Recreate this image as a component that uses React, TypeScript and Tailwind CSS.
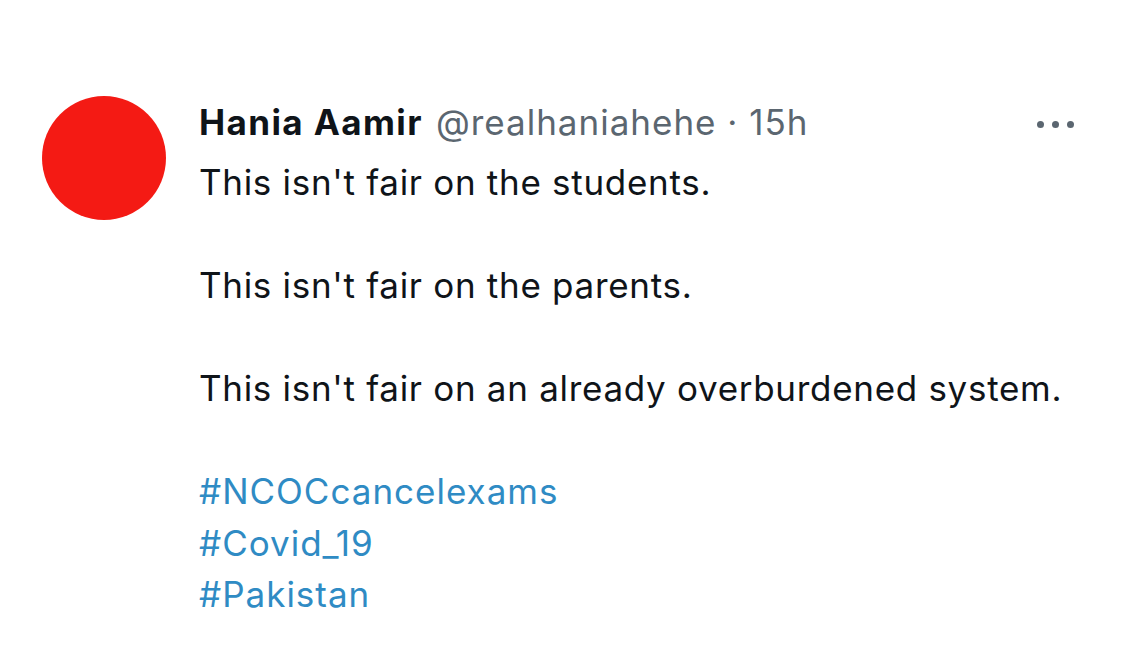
import React from "react";

export default function App() {
  return (
    <div className="w-[1124px] h-[645px] bg-white overflow-hidden" style={{ fontFamily: 'Inter, "Liberation Sans", Arial, sans-serif' }}>
      <div className="flex pl-[42px] pt-[96px] pr-[48px]">
        <div className="w-[124px] h-[124px] rounded-full bg-[#f41a14] shrink-0" />
        <div className="ml-[33px] flex-1">
          <div className="flex items-center h-[52px] leading-[52px]">
            <span className="text-[35px] font-bold text-[#0f1419] tracking-[1.4px]">Hania Aamir</span>
            <span className="text-[35px] text-[#5b6670] ml-[13px] tracking-[1px]">@realhaniahehe · 15h</span>
            <div className="ml-auto flex gap-[8px] mr-[2px] mt-[4px]">
              <span className="w-[7px] h-[7px] rounded-full bg-[#5b6670]" />
              <span className="w-[7px] h-[7px] rounded-full bg-[#5b6670]" />
              <span className="w-[7px] h-[7px] rounded-full bg-[#5b6670]" />
            </div>
          </div>
          <div className="mt-[8.5px] text-[35px] leading-[51.6px] text-[#0f1419] tracking-[0.7px]">
            <div>This isn't fair on the students.</div>
            <div className="h-[51.6px]" />
            <div>This isn't fair on the parents.</div>
            <div className="h-[51.6px]" />
            <div>This isn't fair on an already overburdened system.</div>
            <div className="h-[51.6px]" />
            <div className="text-[#2f8bc4] tracking-[1px]">#NCOCcancelexams</div>
            <div className="text-[#2f8bc4] tracking-[1px]">#Covid_19</div>
            <div className="text-[#2f8bc4] tracking-[1px]">#Pakistan</div>
          </div>
        </div>
      </div>
    </div>
  );
}
